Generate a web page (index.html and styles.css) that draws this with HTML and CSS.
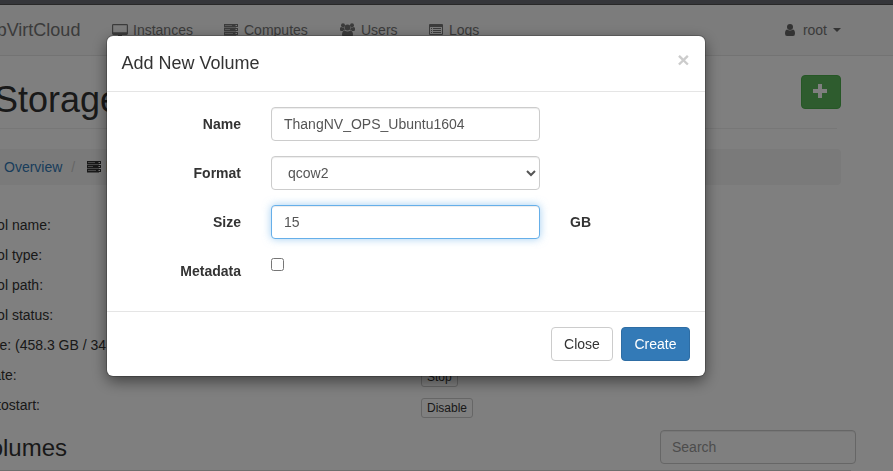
FILE: index.html
```html
<!DOCTYPE html>
<html lang="en">
<head>
<meta charset="utf-8">
<title>WebVirtCloud</title>
<link rel="stylesheet" href="styles.css">
</head>
<body>
<div class="page">
  <div class="topstrip"></div>
  <nav class="navbar">
    <a class="brand">WebVirtCloud</a>
    <a class="nav-item instances"><svg class="desktop" viewBox="0 0 16 14" width="16" height="14"><path fill-rule="evenodd" d="M1.400 0h13.200Q16 0 16 1.400v8.200Q16 11 14.600 11H10v1.200q1 .3 1 1.300H5q0-1 1-1.300V11H1.400Q0 11 0 9.600V1.400Q0 0 1.400 0zM1.200 1.200v7h13.600v-7z"/></svg>Instances</a>
    <a class="nav-item computes"><svg viewBox="0 0 14 12" width="14" height="12"><use href="#server"/></svg>Computes</a>
    <a class="nav-item users"><svg viewBox="0 0 15 14" width="15" height="14"><circle cx="3" cy="2.200" r="2"/><circle cx="12" cy="2.200" r="2"/><circle cx="7.500" cy="4.500" r="3"/><path d="M0 7V5.500Q0 4 1.200 4q1.800 1 2.700.3Q4 6 5 7 3.500 7 2.800 8H1.300Q0 8 0 7zM15 7V5.500Q15 4 13.800 4q-1.800 1-2.700.3Q11 6 10 7q1.500 0 2.200 1h1.500Q15 8 15 7zM4.500 7.500Q2 7.800 2 12q0 2 2 2h7q2 0 2-2 0-4.200-2.500-4.500-3 1.800-6 0z"/></svg>Users</a>
    <a class="nav-item logs"><svg viewBox="0 0 14 12" width="14" height="12"><path fill-rule="evenodd" d="M1 0h12q1 0 1 1v9q0 1-1 1H1q-1 0-1-1V1q0-1 1-1zm0 3v7h12V3z"/><path d="M2 4h1v1H2zm2 0h8v1H4zM2 6h1v1H2zm2 0h8v1H4zM2 8h1v1H2zm2 0h8v1H4z"/></svg>Logs</a>
    <a class="nav-item user"><svg viewBox="0 0 10 12" width="10" height="12"><circle cx="5" cy="3" r="3"/><path d="M2 5.500Q0 6 0 9.500 0 12 2 12h6q2 0 2-2.500Q10 6 8 5.500q-3 2.200-6 0z"/></svg>root<span class="caret"></span></a>
  </nav>
  <main class="content">
    <header class="page-header">
      <h2>Storage</h2>
      <button class="add" aria-label="Add"><svg viewBox="0 0 14 14" width="14" height="14"><path d="M5 0h4v5h5v4H9v5H5V9H0V5h5z"/></svg></button>
    </header>
    <div class="breadcrumb"><a>Overview</a><i>/</i><svg viewBox="0 0 14 12" width="14" height="12"><g id="server"><path fill-rule="evenodd" d="M0 0h14v3H0zm1 1v1h7V1zm10 0v1h2V1zM0 4h14v3H0zm1 1v1h5V5zm10 0v1h2V5zM0 8h14v3H0zm1 1v1h8V9zm10 0v1h2V9z"/><path opacity=".5" d="M0 0h12v12H0z"/></g></svg><span class="muted">kvm</span></div>
    <section class="details">
      <div class="labels">
        <p>Pool name:</p><p>Pool type:</p><p>Pool path:</p><p>Pool status:</p><p>Size: (458.3 GB / 34</p><p>State:</p><p>Autostart:</p>
      </div>
      <div class="actions"><button>Stop</button><button>Disable</button></div>
    </section>
    <div class="volumes"><h3>Volumes</h3><input placeholder="Search" aria-label="Search"></div>
    <div class="tableline"></div>
  </main>
</div>
<div class="backdrop"></div>
<form class="modal">
  <header><h4>Add New Volume</h4><button type="button" class="close" aria-label="Close">×</button></header>
  <div class="modal-body">
    <div class="row"><label>Name</label><input value="ThangNV_OPS_Ubuntu1604"></div>
    <div class="row"><label>Format</label><select><option>qcow2</option></select></div>
    <div class="row"><label>Size</label><input class="focused" value="15"><b>GB</b></div>
    <div class="row"><label>Metadata</label><input type="checkbox"></div>
  </div>
  <footer><button type="button" class="btn">Close</button><button type="button" class="btn primary">Create</button></footer>
</form>
</body>
</html>
```
FILE: styles.css
```css
* { box-sizing: border-box; }
html, body { margin: 0; height: 100%; overflow: hidden; }
body { font: 14px/20px "Liberation Sans", Arial, sans-serif; color: #333; background: #fff; }
h2, h3, h4, p { margin: 0; font-weight: 500; }
h2, h3, h4 { font-weight: 400; }
button, input, select { font: inherit; }
svg { fill: currentColor; }
.page { height: 471px; overflow: hidden; }
.topstrip { height: 5px; background: #6a6c74; border-bottom: 1px solid #505050; }
.navbar { display: flex; align-items: center; height: 51px; background: #f8f8f8; border-bottom: 1px solid #e7e7e7; color: #777; }
.brand { width: 142px; margin-left: -30px; font-size: 18px; flex: none; }
.nav-item { display: flex; align-items: center; gap: 5px; flex: none; }
.desktop { position: relative; top: 1px; }
.instances { width: 112px; }
.computes { width: 116px; gap: 6px; }
.users { width: 89px; gap: 6px; }
.logs { gap: 6px; }
.user { margin-left: auto; margin-right: 52px; gap: 8px; }
.user svg { fill: #666; }
.caret { border: 4px solid transparent; border-top-color: #666; border-bottom: 0; margin-left: -2px; }
.content { margin-left: -29px; width: 870px; }
.page-header { display: flex; justify-content: space-between; align-items: flex-start; height: 73px; width: 866px; padding: 19px 0 0 23px; border-bottom: 1px solid #eee; }
.page-header h2 { font-size: 36px; line-height: 50px; }
.add { width: 40px; height: 34px; margin-right: -4px; padding: 0 2px 2px 0; display: grid; place-items: center; background: #5cb85c; border: 1px solid #4cae4c; border-radius: 4px; color: #fff; }
.breadcrumb { height: 36px; margin-top: 20px; padding: 0 0 0 33px; display: flex; align-items: center; background: #f5f5f5; border-radius: 4px; }
.breadcrumb a { color: #337ab7; }
.breadcrumb i { font-style: normal; color: #ccc; margin: 0 12px 0 9px; }
.breadcrumb .muted { color: #a94442; margin-left: 5px; }
.details { display: flex; height: 225px; padding-top: 25px; }
.labels { width: 450px; padding-left: 9px; display: grid; grid-auto-rows: 30px; line-height: 30px; }
.actions { display: flex; flex-direction: column; align-items: flex-start; gap: 11px; padding-top: 155px; }
.actions button { position: relative; top: 2px; height: 22px; padding: 0 5px; font-size: 12px; line-height: 18px; background: #fff; border: 1px solid #ccc; border-radius: 3px; color: #333; }
.volumes { display: flex; justify-content: space-between; width: 885px; padding: 20px 0 0 4px; }
.volumes h3 { font-size: 24px; line-height: 36px; }
input:not([type]), select { height: 34px; padding: 6px 12px; border: 1px solid #ccc; border-radius: 4px; background: #fff; color: #555; box-shadow: inset 0 1px 1px rgba(0,0,0,.075); outline: 0; }
.volumes input { width: 196px; padding-left: 11px; }
.volumes input::placeholder { color: #999; }
.tableline { height: 2px; margin-top: 4px; width: 880px; background: #ddd; }
.backdrop { position: fixed; inset: 0; background: rgba(0,0,0,.5); }
.modal { position: fixed; left: 107px; top: 36px; width: 598px; height: 340px; background: #fff; border-radius: 6px; box-shadow: 0 0 0 1px rgba(0,0,0,.2), 0 5px 15px rgba(0,0,0,.5); }
.modal header { display: flex; justify-content: space-between; height: 56px; padding: 14px 15px 0 14.500px; border-bottom: 1px solid #e5e5e5; }
.modal h4 { font-size: 18px; line-height: 26px; }
.close { width: 13px; height: 20px; padding: 0; border: 0; background: none; color: #ccc; font-size: 21px; font-weight: 700; line-height: 20px; }
.modal-body { display: grid; grid-auto-rows: 34px; gap: 15px; height: 219px; padding: 15px 0 0 14px; }
.row { display: flex; align-items: center; }
.row label { width: 120px; margin-right: 30px; text-align: right; font-weight: 700; }
.row input:not([type]), .row select { width: 269px; }
.row input.focused { border-color: #66afe9; box-shadow: inset 0 1px 1px rgba(0,0,0,.075), 0 0 8px rgba(102,175,233,.6); }
.row b { margin-left: 30px; }
.row input[type=checkbox] { width: 13px; height: 13px; margin: -14px 0 0; }
.modal footer { display: flex; justify-content: flex-end; gap: 8px; border-top: 1px solid #e5e5e5; padding: 15px; }
.btn { width: 62px; height: 34px; padding: 0; background: #fff; border: 1px solid #ccc; border-radius: 4px; color: #333; }
.primary { width: 69px; background: #337ab7; border-color: #2e6da4; color: #fff; }
```
